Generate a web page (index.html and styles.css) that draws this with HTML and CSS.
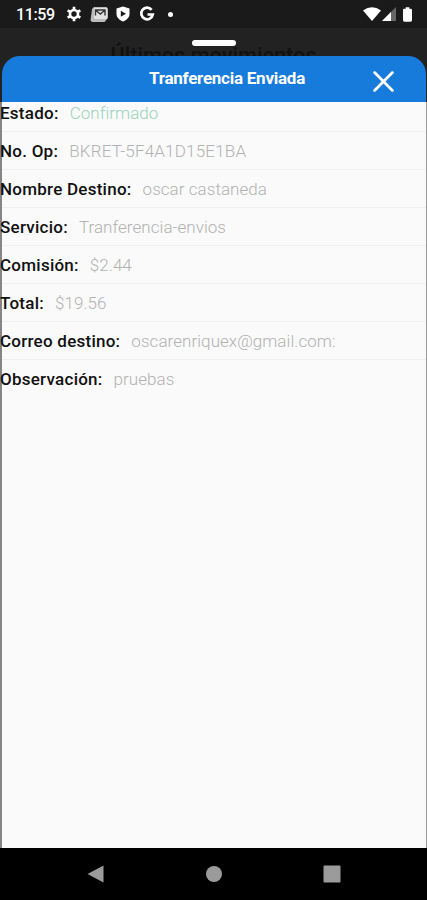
FILE: index.html
```
<!DOCTYPE html>
<html lang="es">
<head>
<meta charset="UTF-8" />
<title>Tranferencia Enviada</title>
<link rel="stylesheet" href="styles.css">
</head>
<body>

<div class="status-bar">
  <span class="time">11:59</span>
  <svg class="icon gear" viewBox="0 0 24 24"><path fill="none" stroke="#fff" stroke-width="4" d="M12 1v5M12 18v5M2.500 6.500l4.300 2.500M17.200 15l4.300 2.500M2.500 17.500l4.300-2.500M17.200 9l4.300-2.500"/><circle cx="12" cy="12" r="6" fill="none" stroke="#fff" stroke-width="4"/></svg>
  <svg class="icon gallery" viewBox="0 0 18 16"><path fill="#bbb" d="M2 3 4 1h12.500L18 2.500V12l-3.500 4H2L.5 14.500z"/><rect x="4" y="2" width="13" height="11" rx="1" fill="#e2e2e2"/><path fill="none" stroke="#333" stroke-width="1.400" d="M5.500 9.500V4h9.500v5.500M6 4.500l4.300 3.500L14.500 4.500"/></svg>
  <svg class="icon shield" viewBox="0 0 14 16"><path fill="#fff" d="M7 .5 13.500 2.500V8c0 3.500-3 6-6.500 7.500C3.500 14 .5 11.500.5 8V2.500z"/><path fill="#1a1a1a" d="M4.800 4.700 10 7.700 4.800 10.700z"/></svg>
  <svg class="icon google" viewBox="0 0 16 16"><path fill="none" stroke="#fff" stroke-width="2.700" d="M12.600 3.800A5.800 5.800 0 1 0 13.800 8.500H8.500"/></svg>
  <span class="dot"></span>
  <svg class="icon wifi" viewBox="0 0 18 14"><path fill="#fff" d="M0 3.500Q9-3 18 3.500L9 14z"/></svg>
  <svg class="icon signal" viewBox="0 0 14 14"><path fill="#666" d="M14 0v14H0z"/><path fill="#fff" d="M9 5v9H0z"/></svg>
  <svg class="icon battery" viewBox="0 0 10 16"><path fill="#fff" d="M3 0h4v1.500h1.500Q10 1.500 10 3v11.500q0 1.500-1.500 1.500h-7Q0 16 0 14.500V3q0-1.500 1.500-1.500H3z"/></svg>
</div>

<div class="backdrop">
  <div class="handle"></div>
  <div class="behind">Últimos movimientos</div>
</div>

<div class="modal">
  <div class="modal-header">
    <h3>Tranferencia Enviada</h3>
    <svg class="close" viewBox="0 0 20 20"><path fill="none" stroke="#fff" stroke-width="2.600" stroke-linecap="round" d="M1.500 1.500l17 17M18.500 1.500l-17 17"/></svg>
  </div>
  <div class="details">
    <div class="row"><b>Estado:</b><span class="ok">Confirmado</span></div>
    <div class="row"><b>No. Op:</b><span class="code">BKRET-5F4A1D15E1BA</span></div>
    <div class="row"><b>Nombre Destino:</b><span>oscar castaneda</span></div>
    <div class="row"><b>Servicio:</b><span>Tranferencia-envios</span></div>
    <div class="row"><b>Comisión:</b><span>$2.44</span></div>
    <div class="row"><b>Total:</b><span>$19.56</span></div>
    <div class="row"><b>Correo destino:</b><span>oscarenriquex@gmail.com:</span></div>
    <div class="row"><b>Observación:</b><span>pruebas</span></div>
  </div>
</div>

<div class="nav-bar">
  <svg viewBox="0 0 18 18"><path fill="#9b9b9b" d="M17.500.5v17L1.500 9z"/></svg>
  <svg viewBox="0 0 18 18"><circle cx="9" cy="9" r="8" fill="#9b9b9b"/></svg>
  <svg viewBox="0 0 18 18"><rect x=".5" y=".5" width="17" height="17" rx="1" fill="#9b9b9b"/></svg>
</div>

</body>
</html>
```
FILE: styles.css
```
body {
  font-family: Roboto, sans-serif;
  margin: 0;
  width: 427px;
  height: 900px;
  display: flex;
  flex-direction: column;
  overflow: hidden;
  background-color: #222;
}

.status-bar {
  height: 28px;
  box-sizing: border-box;
  padding-left: 16px;
  display: flex;
  align-items: center;
  background-color: #1a1a1a;
}

.time {
  width: 50px;
  font-size: 16px;
  font-weight: 500;
  color: #fff;
  letter-spacing: -0.4px;
}

.icon {
  display: block;
  flex: none;
}

.gear {
  width: 16px;
  height: 16px;
}

.gallery {
  width: 18px;
  height: 16px;
  margin-left: 8px;
}

.shield {
  width: 14px;
  height: 16px;
  margin-left: 8px;
}

.google {
  width: 16px;
  height: 16px;
  margin-left: 9px;
}

.dot {
  width: 5px;
  height: 5px;
  margin-left: 13px;
  border-radius: 50%;
  background-color: #fff;
}

.wifi {
  width: 18px;
  height: 14px;
  margin-left: auto;
}

.signal {
  width: 14px;
  height: 14px;
  margin-left: 1px;
}

.battery {
  width: 9px;
  height: 15px;
  margin: 0 15px 0 7px;
}

.backdrop {
  height: 28px;
  display: flex;
  flex-direction: column;
  align-items: center;
}

.handle {
  width: 44px;
  height: 6px;
  margin-top: 12px;
  flex: none;
  border-radius: 3px;
  background-color: #fff;
}

.behind {
  margin-top: -2px;
  font-size: 21.7px;
  line-height: 24px;
  font-weight: 500;
  color: #111;
  white-space: nowrap;
}

.modal {
  position: relative;
  flex: 1;
  display: flex;
  flex-direction: column;
}

.modal-header {
  position: relative;
  height: 46px;
  margin: 0 1px 0 2px;
  border-radius: 18px 18px 0 0;
  background-color: #177bdc;
}

.modal-header h3 {
  margin: 0 0 0 26px;
  font-size: 17px;
  line-height: 45px;
  text-align: center;
  color: #fff;
  letter-spacing: -0.25px;
}

.close {
  position: absolute;
  top: 15px;
  right: 32px;
  width: 21px;
  height: 21px;
}

.details {
  flex: 1;
  border-left: 2px solid #858585;
  border-right: 1px solid #999;
  background-color: #fafafa;
}

.row {
  height: 38px;
  box-sizing: border-box;
  display: flex;
  align-items: center;
  gap: 11px;
  border-bottom: 1px solid #f0f0f0;
  font-size: 17px;
  white-space: nowrap;
}

.row:first-child {
  height: 30px;
  padding-bottom: 7px;
}

.row:last-child {
  border-bottom: none;
}

.row b {
  margin-left: -2px;
  font-weight: 500;
  color: #111;
  letter-spacing: 0.25px;
}

.row span {
  font-weight: 300;
  color: #b2b2b2;
  letter-spacing: 0.05px;
}

.row .code {
  letter-spacing: 0.2px;
}

.row .ok {
  color: #98d3b9;
}

.nav-bar {
  height: 52px;
  padding: 0 86px;
  display: flex;
  align-items: center;
  justify-content: space-between;
  position: relative;
  background-color: #000;
}

.nav-bar svg {
  width: 18px;
  height: 18px;
}
```
